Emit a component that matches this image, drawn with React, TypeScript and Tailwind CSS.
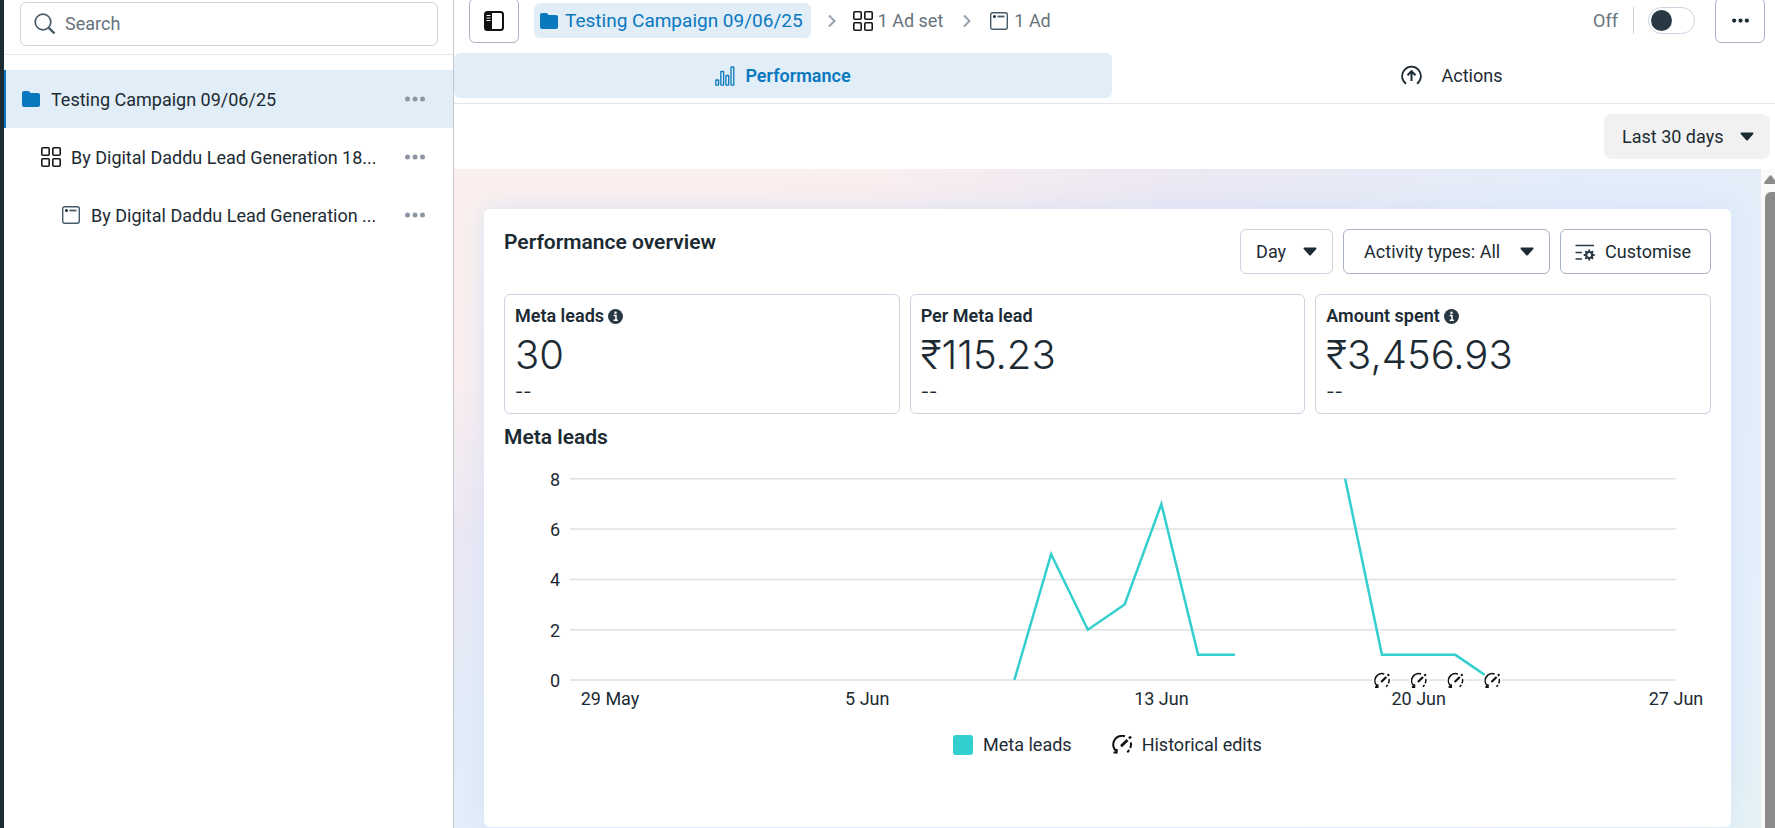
import type { ReactNode } from 'react';

interface Metric {
  label: string;
  value: string;
  info?: boolean;
}

interface Point {
  day: number;
  value: number;
}

const metrics: Metric[] = [
  { label: 'Meta leads', value: '30', info: true },
  { label: 'Per Meta lead', value: '₹115.23' },
  { label: 'Amount spent', value: '₹3,456.93', info: true },
];

// Days are counted from 29 May
const series: Point[][] = [
  [
    { day: 11, value: 0 },
    { day: 12, value: 5 },
    { day: 13, value: 2 },
    { day: 14, value: 3 },
    { day: 15, value: 7 },
    { day: 16, value: 1 },
    { day: 17, value: 1 },
  ],
  [
    { day: 20, value: 8 },
    { day: 21, value: 1 },
    { day: 22, value: 1 },
    { day: 23, value: 1 },
    { day: 24, value: 0 },
  ],
];

const edits = [21, 22, 23, 24];

const ticks = [
  { day: 0, label: '29 May' },
  { day: 7, label: '5 Jun' },
  { day: 15, label: '13 Jun' },
  { day: 22, label: '20 Jun' },
  { day: 29, label: '27 Jun' },
];

const chartX = (day: number) => 106 + (day * 1066) / 29;
const chartY = (value: number) => 221 - value * 25.15;

function FolderIcon() {
  return (
    <svg className="w-5 h-5 shrink-0" viewBox="0 0 20 20" fill="#0a78be" aria-hidden="true">
      <path d="M1 4a2 2 0 0 1 2-2h4a2 2 0 0 1 1.6.8L9.6 4H17a2 2 0 0 1 2 2v10a2 2 0 0 1-2 2H3a2 2 0 0 1-2-2z" />
    </svg>
  );
}

function GridIcon() {
  return (
    <svg className="w-5 h-5 shrink-0" viewBox="0 0 20 20" fill="none" stroke="#15191c" strokeWidth="1.6" aria-hidden="true">
      <rect x="0.8" y="0.8" width="7.4" height="7.4" rx="1" />
      <rect x="11.8" y="0.8" width="7.4" height="7.4" rx="1" />
      <rect x="0.8" y="11.8" width="7.4" height="7.4" rx="1" />
      <rect x="11.8" y="11.8" width="7.4" height="7.4" rx="1" />
    </svg>
  );
}

function AdIcon() {
  return (
    <svg className="w-5 h-5 shrink-0" viewBox="0 0 20 20" fill="none" stroke="#465a69" strokeWidth="1.4" aria-hidden="true">
      <rect x="1.7" y="1.7" width="16.6" height="16.6" rx="2" />
      <path d="M8.5 5.5H15.5" strokeWidth="1.8" />
      <circle cx="5.5" cy="5.5" r="1.5" fill="#1c2b33" stroke="none" />
    </svg>
  );
}

function ChevronIcon() {
  return (
    <svg className="w-3 h-4 shrink-0" viewBox="0 0 12 16" fill="none" stroke="#98a2ae" strokeWidth="2" aria-hidden="true">
      <path d="M3 2.5L8.5 8L3 13.5" />
    </svg>
  );
}

function DotsIcon({ color, small }: { color: string; small?: boolean }) {
  return (
    <svg className={small ? 'w-[17px]' : 'w-5'} viewBox="0 0 20 6" fill={color} aria-hidden="true">
      <circle cx="2.5" cy="3" r="2.5" />
      <circle cx="10" cy="3" r="2.5" />
      <circle cx="17.5" cy="3" r="2.5" />
    </svg>
  );
}

function InfoIcon() {
  return (
    <svg className="w-[15px] h-[15px]" viewBox="0 0 16 16" aria-hidden="true">
      <circle cx="8" cy="8" r="8" fill="#283943" />
      <path d="M6 6.8H8.5V11.8M6 12H10.5" stroke="#fff" strokeWidth="1.6" fill="none" />
      <circle cx="8" cy="4" r="1.3" fill="#fff" />
    </svg>
  );
}

function EditShape() {
  return (
    <g fill="none" stroke="#111" strokeWidth="2">
      <path d="M4 16A8.8 8.8 0 0 1 13 1.3" />
      <path d="M18.8 7.5A8.8 8.8 0 0 1 18.2 13M17.2 15L15.3 17.3" />
      <path d="M9 11.2L15.5 5" strokeWidth="2.8" />
      <path d="M17 3.4L19 1.6" strokeWidth="2.6" />
      <path d="M1.5 17.5H4.6V14" strokeWidth="2.2" />
    </g>
  );
}

interface SelectProps {
  id: string;
  label: string;
  value: string;
  className: string;
}

function Select({ id, label, value, className }: SelectProps) {
  return (
    <div className="relative">
      <select id={id} aria-label={label} className={`appearance-none h-[45px] ${className}`}>
        <option>{value}</option>
      </select>
      <svg className="absolute right-4 top-[18px] w-[14px] h-[9px] pointer-events-none" viewBox="0 0 14 9" fill="#1c2b33" aria-hidden="true">
        <path d="M1.2 0.5H12.8Q14 0.8 13.3 1.9L8 8Q7 9 6 8L0.7 1.9Q0 0.8 1.2 0.5Z" />
      </svg>
    </div>
  );
}

interface TreeRowProps {
  icon: ReactNode;
  text: string;
  className: string;
}

function TreeRow({ icon, text, className }: TreeRowProps) {
  return (
    <li className={`flex items-center h-[58px] pr-7 ${className}`}>
      {icon}
      <a href="#" className="ml-[10px] pt-px flex-1 truncate">{text}</a>
      <button type="button" aria-label="More options" className="ml-4 shrink-0">
        <DotsIcon color="#8f96a3" />
      </button>
    </li>
  );
}

function Sidebar() {
  return (
    <aside className="w-[454px] shrink-0 border-l-4 border-l-[#1c2b33] border-r border-r-[#c3c6ca]">
      <div className="h-[55px] pt-[2px] px-4 pr-[15px] border-b border-[#e4e6e9]">
        <label className="flex items-center h-11 px-[13px] border border-[#cbd2e0] rounded-md">
          <svg className="w-[22px] h-[22px] shrink-0" viewBox="0 0 22 22" fill="none" stroke="#465a69" aria-hidden="true">
            <circle cx="9" cy="9" r="7.8" strokeWidth="1.7" />
            <path d="M14.8 14.8L20.5 20.5" strokeWidth="2.4" />
          </svg>
          <input type="search" aria-label="Search" placeholder="Search" className="ml-[9px] w-full outline-none placeholder:text-[#67737c]" />
        </label>
      </div>
      <ul className="mt-[15px]">
        <TreeRow icon={<FolderIcon />} text="Testing Campaign 09/06/25" className="bg-[#e1edf7] border-l-2 border-[#0a78be] pl-[15px]" />
        <TreeRow icon={<GridIcon />} text="By Digital Daddu Lead Generation 18..." className="pl-[37px]" />
        <TreeRow icon={<AdIcon />} text="By Digital Daddu Lead Generation ..." className="pl-[57px]" />
      </ul>
    </aside>
  );
}

function Toolbar() {
  return (
    <header className="flex items-center h-[41px] pl-[15px] pr-[10px] text-[#67737c]">
      <button type="button" aria-label="Toggle sidebar" className="w-[50px] h-[45px] flex items-center justify-center border border-[#a7b3c2] rounded-md">
        <svg className="w-5 h-5" viewBox="0 0 20 20" aria-hidden="true">
          <rect x="1" y="1" width="18" height="18" rx="2.5" fill="#fff" stroke="#111" strokeWidth="2" />
          <path d="M1 3a2 2 0 0 1 2-2h5v18H3a2 2 0 0 1-2-2z" fill="#111" />
          <path d="M2.5 4.5H6.5M2.5 7H6.5M2.5 9.5H6.5" stroke="#fff" strokeWidth="1.2" />
        </svg>
      </button>
      <nav className="flex items-center ml-[15px]">
        <a href="#" className="flex items-center gap-[6px] h-[35px] pl-[5px] pr-2 rounded-md bg-[#e1edf7] text-[19px] text-[#0a78be]">
          <FolderIcon />
          Testing Campaign 09/06/25
        </a>
        <span className="mx-[15px]"><ChevronIcon /></span>
        <a href="#" className="flex items-center gap-[5px]">
          <GridIcon />
          1 Ad set
        </a>
        <span className="ml-[18px] mr-4"><ChevronIcon /></span>
        <a href="#" className="flex items-center gap-[5px]">
          <AdIcon />
          1 Ad
        </a>
      </nav>
      <label htmlFor="status" className="ml-auto">Off</label>
      <span className="w-px h-[27px] ml-[15px] mr-[14px] bg-[#cbd2d9]"></span>
      <input
        id="status"
        type="checkbox"
        role="switch"
        className="appearance-none flex items-center w-[47px] h-[27px] pl-[2px] rounded-full border border-[#cbd2e0] before:block before:w-[21px] before:h-[21px] before:rounded-full before:bg-[#283943]"
      />
      <button type="button" aria-label="More" className="ml-5 w-[50px] h-[45px] flex items-center justify-center border border-[#a7b3c2] rounded-md">
        <DotsIcon color="#1c2b33" small />
      </button>
    </header>
  );
}

function Chart() {
  return (
    <svg className="block w-full mt-[9px]" viewBox="0 0 1207 260" role="img" aria-label="Meta leads by day">
      {[8, 6, 4, 2, 0].map((value) => (
        <g key={value}>
          <path d={`M66 ${chartY(value)}H1172`} stroke="#dfe0e2" strokeWidth="1.5" />
          <text x="56" y={chartY(value) + 7} textAnchor="end" fontSize="18" fill="#1c2b33">{value}</text>
        </g>
      ))}
      {series.map((points, index) => (
        <polyline
          key={index}
          points={points.map((p) => `${chartX(p.day)},${chartY(p.value)}`).join(' ')}
          fill="none"
          stroke="#33cfcf"
          strokeWidth="2.5"
        />
      ))}
      {edits.map((day) => (
        <g key={day} transform={`translate(${chartX(day) - 8} ${chartY(0) - 7})`}>
          <circle cx="8" cy="8" r="10" fill="#fff" />
          <g transform="scale(0.8)">
            <EditShape />
          </g>
        </g>
      ))}
      {ticks.map((tick) => (
        <text key={tick.day} x={chartX(tick.day)} y="246" textAnchor="middle" fontSize="18" fill="#1c2b33">{tick.label}</text>
      ))}
    </svg>
  );
}

function Overview() {
  return (
    <section className="bg-white rounded-md px-5 pt-5 min-h-[618px] shadow-[0_0_24px_rgba(205,222,248,0.7)]">
      <div className="flex items-start justify-between">
        <h2 className="text-[21px] leading-[26px] font-semibold">Performance overview</h2>
        <div className="flex gap-[10px]">
          <Select id="interval" label="Interval" value="Day" className="pl-[15px] pr-[46px] border border-[#cbd2e0] rounded-md" />
          <Select id="activity" label="Activity types" value="Activity types: All" className="pl-5 pr-[48px] border border-[#a7b3c2] rounded-md" />
          <button type="button" className="flex items-center gap-[10px] h-[45px] pl-[14px] pr-[19px] border border-[#a7b3c2] rounded-md">
            <svg className="w-5 h-5" viewBox="0 0 20 20" fill="none" stroke="#283943" strokeWidth="1.5" aria-hidden="true">
              <path d="M0.5 3.5H19M0.5 10.5H7M0.5 17H7" />
              <circle cx="14.2" cy="13" r="3" strokeWidth="2.2" />
              <path d="M14.2 7.5V9.5M14.2 16.5V18.5M8.7 13H10.7M17.7 13H19.7M10.3 9.1L11.7 10.5M16.7 15.5L18.1 16.9M10.3 16.9L11.7 15.5M16.7 10.5L18.1 9.1" strokeWidth="1.8" />
            </svg>
            Customise
          </button>
        </div>
      </div>

      {/* Metric cards */}
      <div className="grid grid-cols-3 gap-[10px] mt-5">
        {metrics.map((metric) => (
          <div key={metric.label} className="h-[120px] px-[10px] pt-[9px] border border-[#cbd2e0] rounded-md">
            <div className="flex items-center gap-1 leading-6 font-semibold">
              {metric.label}
              {metric.info && <InfoIcon />}
            </div>
            <div className="font-['Inter',sans-serif] font-light text-[40px] leading-[54px]">{metric.value}</div>
            <div className="font-['Inter',sans-serif] leading-5">--</div>
          </div>
        ))}
      </div>

      <h3 className="mt-[10px] text-[21px] leading-[26px] font-semibold">Meta leads</h3>
      <Chart />

      {/* Legend */}
      <div className="flex items-center justify-center gap-10 mt-[14px]">
        <span className="flex items-center gap-[10px]">
          <span className="w-5 h-5 rounded-[3px] bg-[#33cfcf]"></span>
          Meta leads
        </span>
        <span className="flex items-center gap-[10px]">
          <svg className="w-5 h-5" viewBox="0 0 20 20" aria-hidden="true">
            <EditShape />
          </svg>
          Historical edits
        </span>
      </div>
    </section>
  );
}

export default function App() {
  return (
    <div className="flex min-h-screen overflow-hidden bg-white font-['Roboto','Noto_Sans',sans-serif] text-lg leading-6 text-[#1c2b33]">
      <Sidebar />
      <main className="flex flex-col flex-1 min-w-0">
        <Toolbar />

        {/* Tabs */}
        <div className="flex h-[63px] pt-3 border-b border-[#e4e6e9]">
          <button type="button" className="flex items-center justify-center gap-[10px] w-[658px] grow h-[45px] rounded-md bg-[#e1edf7] text-[#0a78be] font-semibold">
            <svg className="w-5 h-5" viewBox="0 0 20 20" fill="none" stroke="#0a78be" strokeWidth="1.3" aria-hidden="true">
              <rect x="0.8" y="14" width="2.8" height="5.2" rx="0.6" />
              <rect x="5.8" y="5.5" width="2.8" height="13.7" rx="0.6" />
              <rect x="10.9" y="9.5" width="2.8" height="9.7" rx="0.6" />
              <rect x="16" y="1" width="2.8" height="18.2" rx="0.6" />
            </svg>
            Performance
          </button>
          <button type="button" className="flex items-center justify-center gap-5 w-[663px] grow h-[45px] pl-4">
            <svg className="w-[21px] h-[21px]" viewBox="0 0 21 21" fill="none" stroke="#1c2b33" strokeWidth="1.8" aria-hidden="true">
              <path d="M5 18.7A9.4 9.4 0 1 1 16 18.7" />
              <path d="M10.5 16V6.5M6.5 10.2L10.5 6.2L14.5 10.2" strokeWidth="2" />
            </svg>
            Actions
          </button>
        </div>

        <div className="flex justify-end items-center h-[65px] pr-[5px]">
          <Select id="range" label="Date range" value="Last 30 days" className="pl-[18px] pr-[46px] rounded-lg bg-[#f1f1f1]" />
        </div>

        {/* Scrolling content */}
        <div className="flex flex-1">
          <div className="flex-1 min-w-0 px-[30px] pt-10 bg-[radial-gradient(100%_100%_at_0%_0%,#fbf0ee_0%,#faeeef_32%,#ece8f4_55%,#e3edf9_85%,#e4f0fa_125%,#e5f4f3_150%)]">
            <Overview />
          </div>
          <div className="w-[14px] shrink-0 pt-[6px] pl-[3px] bg-[#fafafa] flex flex-col" aria-hidden="true">
            <svg className="w-[14px] h-[9px] mb-2 shrink-0" viewBox="0 0 14 9" fill="#8b8b8b">
              <path d="M1 9Q-0.5 8.5 0.5 7L5.5 0.8Q6.5 -0.2 7.5 0.8L12.5 7Q13.5 8.5 12 9Z" />
            </svg>
            <div className="flex-1 ml-px rounded-tl-md bg-[#8b8b8b]"></div>
          </div>
        </div>
      </main>
    </div>
  );
}
